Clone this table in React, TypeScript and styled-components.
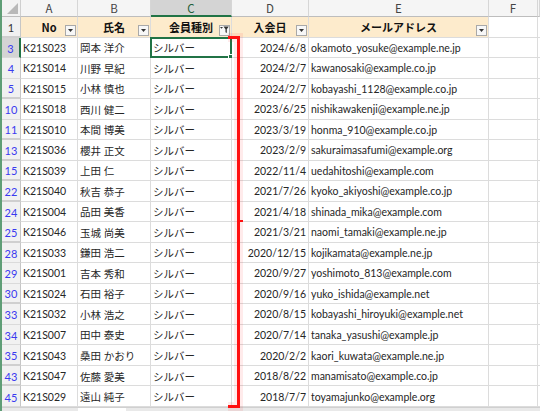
import React from "react";
import styled, { createGlobalStyle, css } from "styled-components";

const Global = createGlobalStyle`
  html, body { margin: 0; padding: 0; background: #ffffff; overflow: hidden; }
  body { width: 540px; height: 411px; }
`;

const FONT = `"Noto Sans CJK JP", "Noto Sans", sans-serif`;
const DATA_FONT = `Lato, "Noto Sans CJK JP", sans-serif`;

const Sheet = styled.div`
  position: relative;
  width: 540px;
  height: 411px;
  box-sizing: border-box;
  border-left: 2px solid #5f9e76;
  display: flex;
  flex-direction: column;
  font-family: ${FONT};
  overflow: hidden;
`;

const Grid = styled.div`
  display: grid;
  grid-template-columns: 19px 57px 73px 81px 77px 180px 49px 2px;
  grid-template-rows: 17px repeat(19, 20.53px);
`;

const Corner = styled.div`
  position: relative;
  box-sizing: border-box;
  background: #f3f3f3;
  border-right: 1px solid #cfcfcf;
  border-bottom: 1px solid #bdbdbd;
  &::after {
    content: "";
    position: absolute;
    right: 2px;
    bottom: 2px;
    width: 0;
    height: 0;
    border-left: 11px solid transparent;
    border-bottom: 11px solid #b9b9b9;
  }
`;

const ColHead = styled.div<{ $selected?: boolean }>`
  box-sizing: border-box;
  display: flex;
  align-items: center;
  justify-content: center;
  font-size: 11.5px;
  color: #444;
  background: #f5f5f5;
  border-right: 1px solid #d6d6d6;
  border-bottom: 1px solid #bdbdbd;
  ${(p) =>
    p.$selected &&
    css`
      background: #d4d4d4;
      color: #1f5f3a;
      border-bottom: 2px solid #217346;
    `}
`;

const RowHead = styled.div<{ $selected?: boolean; $filtered?: boolean; $gap?: boolean }>`
  box-sizing: border-box;
  display: flex;
  align-items: center;
  justify-content: center;
  padding-top: 2px;
  font-family: ${DATA_FONT};
  font-size: 11px;
  color: ${(p) => (p.$filtered ? "#3a3af0" : "#333")};
  background: #f1f1f1;
  border-right: 1px solid #c6c6c6;
  border-bottom: ${(p) => (p.$gap ? "2px solid #cfcfcf" : "1px solid #dadada")};
  ${(p) =>
    p.$selected &&
    css`
      background: #d4d4d4;
      border-right: 2px solid #217346;
    `}
`;

const Cell = styled.div<{ $align?: "left" | "right" | "center"; $header?: boolean; $blank?: boolean }>`
  position: relative;
  box-sizing: border-box;
  display: flex;
  align-items: center;
  padding: 1px 2px 0 2px;
  justify-content: ${(p) =>
    p.$align === "right" ? "flex-end" : p.$align === "center" ? "center" : "flex-start"};
  white-space: nowrap;
  overflow: visible;
  font-family: ${DATA_FONT};
  font-size: 10.5px;
  color: #262626;
  background: ${(p) => (p.$header && !p.$blank ? "#fdebcc" : "#ffffff")};
  border-right: 1px solid #dcdcdc;
  border-bottom: 1px solid #dcdcdc;
  ${(p) =>
    p.$header &&
    !p.$blank &&
    css`
      font-family: ${FONT};
      font-weight: 700;
      font-size: 11px;
      color: #111;
    `}
`;

const SelectedBox = styled.div`
  position: absolute;
  left: -1px;
  top: -1px;
  right: -1px;
  bottom: -1px;
  border: 2px solid #217346;
  pointer-events: none;
  &::after {
    content: "";
    position: absolute;
    right: -4px;
    bottom: -4px;
    width: 4px;
    height: 4px;
    background: #217346;
    border: 1px solid #fff;
  }
`;

const FilterBtn = styled.span`
  position: absolute;
  right: 1px;
  bottom: 1px;
  width: 11px;
  height: 11px;
  box-sizing: border-box;
  border: 1px solid #a9a9a9;
  background: #f7f7f7;
  display: flex;
  align-items: center;
  justify-content: center;
`;

const BottomStrip = styled.div`
  flex: 1;
  background: #e9e9e9;
  border-top: 1px solid #d0d0d0;
  display: flex;
  padding-left: 76px;
`;

const SheetTab = styled.div`
  width: 48px;
  background: #ffffff;
`;

const Overlay = styled.svg`
  position: absolute;
  left: -2px;
  top: 0;
  pointer-events: none;
`;

type Row = [number, string, string, string, string];

const rows: Row[] = [
  [3, "K21S023", "岡本 洋介", "2024/6/8", "okamoto_yosuke@example.ne.jp"],
  [4, "K21S014", "川野 早紀", "2024/2/7", "kawanosaki@example.co.jp"],
  [5, "K21S015", "小林 慎也", "2024/2/7", "kobayashi_1128@example.co.jp"],
  [10, "K21S018", "西川 健二", "2023/6/25", "nishikawakenji@example.ne.jp"],
  [11, "K21S010", "本間 博美", "2023/3/19", "honma_910@example.co.jp"],
  [13, "K21S036", "櫻井 正文", "2023/2/9", "sakuraimasafumi@example.org"],
  [15, "K21S039", "上田 仁", "2022/11/4", "uedahitoshi@example.com"],
  [22, "K21S040", "秋吉 恭子", "2021/7/26", "kyoko_akiyoshi@example.co.jp"],
  [24, "K21S004", "品田 美香", "2021/4/18", "shinada_mika@example.com"],
  [25, "K21S046", "玉城 尚美", "2021/3/21", "naomi_tamaki@example.ne.jp"],
  [28, "K21S033", "鎌田 浩二", "2020/12/15", "kojikamata@example.ne.jp"],
  [29, "K21S001", "吉本 秀和", "2020/9/27", "yoshimoto_813@example.com"],
  [30, "K21S024", "石田 裕子", "2020/9/16", "yuko_ishida@example.net"],
  [33, "K21S032", "小林 浩之", "2020/8/15", "kobayashi_hiroyuki@example.net"],
  [34, "K21S007", "田中 泰史", "2020/7/14", "tanaka_yasushi@example.jp"],
  [35, "K21S043", "桑田 かおり", "2020/2/2", "kaori_kuwata@example.ne.jp"],
  [43, "K21S047", "佐藤 愛美", "2018/8/22", "manamisato@example.co.jp"],
  [45, "K21S029", "遠山 純子", "2018/7/7", "toyamajunko@example.org"],
];

const DropArrow = () => (
  <svg width="5" height="3" viewBox="0 0 5 3">
    <path d="M0 0 H5 L2.5 3 Z" fill="#333" />
  </svg>
);

const FunnelIcon = () => (
  <svg width="9" height="8" viewBox="0 0 9 8">
    <path d="M0 1 H3 L1.5 2.8 Z" fill="#333" />
    <path d="M3.5 0.5 H8.8 L6.8 3.3 V7 L5.5 6.2 V3.3 Z" fill="#333" />
  </svg>
);

const Filter = ({ active }: { active?: boolean }) => (
  <FilterBtn>{active ? <FunnelIcon /> : <DropArrow />}</FilterBtn>
);

export default function App() {
  const cols = ["A", "B", "C", "D", "E", "F"];
  return (
    <>
      <Global />
      <Sheet>
        <Grid>
          <Corner />
          {cols.map((c) => (
            <ColHead key={c} $selected={c === "C"}>
              {c}
            </ColHead>
          ))}
          <ColHead />

          <RowHead $gap>1</RowHead>
          <Cell $header $align="center">
            No
            <Filter />
          </Cell>
          <Cell $header $align="center">
            氏名
            <Filter />
          </Cell>
          <Cell $header $align="center">
            会員種別
            <Filter active />
          </Cell>
          <Cell $header $align="center">
            入会日
            <Filter />
          </Cell>
          <Cell $header $align="center">
            メールアドレス
            <Filter />
          </Cell>
          <Cell $header $blank />
          <Cell $header $blank />

          {rows.map((r, i) => {
            const next = rows[i + 1];
            const gap = !!next && next[0] !== r[0] + 1;
            return (
              <React.Fragment key={r[0]}>
                <RowHead $filtered $selected={r[0] === 3} $gap={gap}>
                  {r[0]}
                </RowHead>
                <Cell>{r[1]}</Cell>
                <Cell>{r[2]}</Cell>
                <Cell>
                  シルバー
                  {r[0] === 3 && <SelectedBox />}
                </Cell>
                <Cell $align="right">{r[3]}</Cell>
                <Cell>{r[4]}</Cell>
                <Cell />
                <Cell />
              </React.Fragment>
            );
          })}
        </Grid>
        <BottomStrip>
          <SheetTab />
        </BottomStrip>
        <Overlay width="540" height="411" viewBox="0 0 540 411">
          <path d="M228 37.5 H238.5 V406.5 H228" fill="none" stroke="rgba(255,0,0,0.08)" strokeWidth="9" />
          <path d="M228 37.5 H238.5 V406.5 H228" fill="none" stroke="#ff1010" strokeWidth="3" />
          <path d="M238 221 H243" fill="none" stroke="#ff1010" strokeWidth="2" />
        </Overlay>
      </Sheet>
    </>
  );
}
